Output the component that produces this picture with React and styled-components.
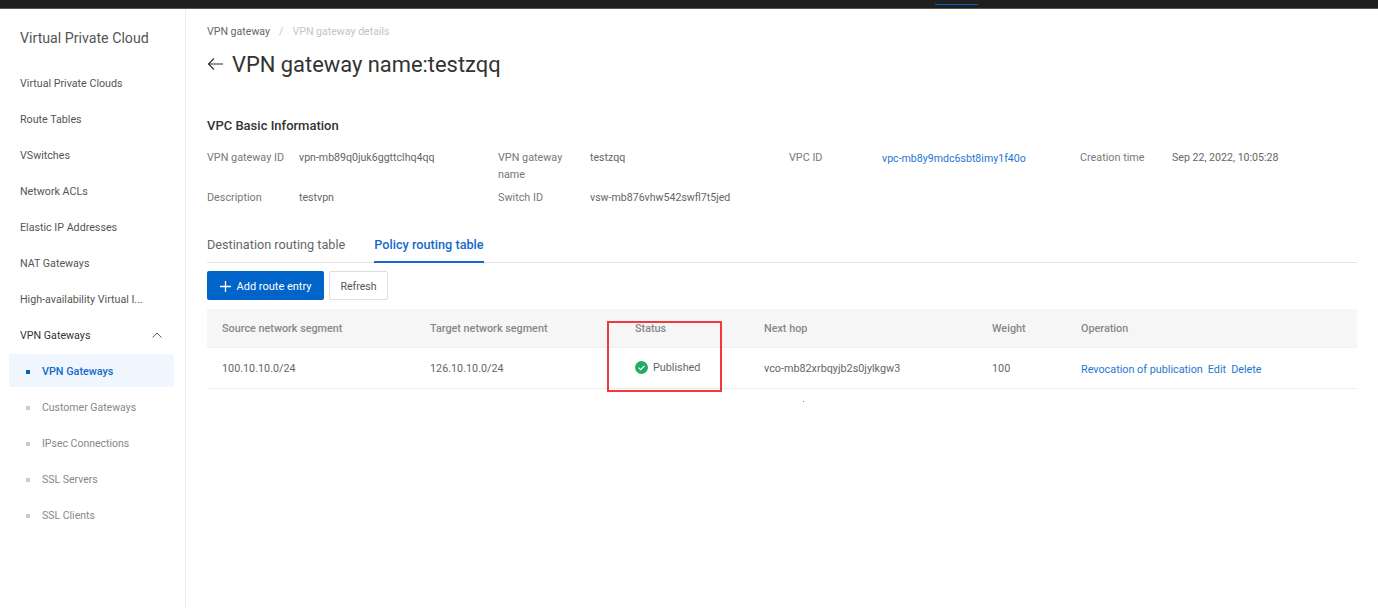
import React from "react";
import styled, { createGlobalStyle } from "styled-components";

const GlobalStyle = createGlobalStyle`
  html, body {
    margin: 0;
    padding: 0;
    background: #fff;
  }
  body {
    font-family: Roboto, "Open Sans", "Liberation Sans", sans-serif;
    font-size: 10.8px;
    color: #666;
  }
  * {
    box-sizing: border-box;
  }
`;

const Page = styled.div`
  width: 1378px;
  height: 608px;
  overflow: hidden;
  display: flex;
  flex-direction: column;
`;

const TopBar = styled.div`
  height: 9px;
  flex: none;
  background: #1f1f1f;
  border-bottom: 1px solid #555;
  padding: 4px 0 0 935px;
`;

const TopIndicator = styled.div`
  width: 43px;
  height: 1px;
  background: #0a5fc4;
`;

const Body = styled.div`
  flex: 1;
  display: flex;
  min-height: 0;
`;

const Sidebar = styled.aside`
  width: 186px;
  flex: none;
  border-right: 1px solid #eeeeee;
  padding: 20px 11px 0 9px;
`;

const SideTitle = styled.div`
  height: 18px;
  line-height: 18px;
  font-size: 14.2px;
  color: #555;
  padding-left: 11px;
  margin-bottom: 18px;
`;

const SideItem = styled.div`
  height: 36px;
  display: flex;
  align-items: center;
  justify-content: space-between;
  padding: 0 12px 0 11px;
  font-size: 10.7px;
  color: ${(p) => (p.$open ? "#333" : "#555")};
`;

const SubList = styled.div`
  display: flex;
  flex-direction: column;
  gap: 3px;
  padding-top: 1px;
`;

const SubItem = styled.div`
  height: 33px;
  display: flex;
  align-items: center;
  gap: 12px;
  padding: 2px 0 0 17px;
  border-radius: 2px;
  font-size: ${(p) => (p.$active ? "10.8px" : "10.5px")};
  color: ${(p) => (p.$active ? "#1469cc" : "#888")};
  font-weight: ${(p) => (p.$active ? 500 : 400)};
  background: ${(p) => (p.$active ? "#eff6fe" : "transparent")};
`;

const SubDot = styled.span`
  width: 4px;
  height: 4px;
  flex: none;
  background: ${(p) => (p.$active ? "#0a5fc4" : "#ccc")};
`;

const Main = styled.main`
  flex: 1;
  min-width: 0;
  position: relative;
  padding: 16px 21px 0 21px;
`;

const Breadcrumb = styled.div`
  display: flex;
  gap: 9px;
  height: 14px;
  line-height: 14px;
  font-size: 10.6px;
  color: #666;
`;

const Crumb = styled.span`
  color: ${(p) => p.$muted && "#c4c4c4"};
`;

const Heading = styled.h1`
  display: flex;
  align-items: center;
  gap: 8px;
  margin: 11px 0 0;
  height: 28px;
  font-size: 21.9px;
  font-weight: 400;
  color: #333;
`;

const SectionTitle = styled.h2`
  margin: 39px 0 0;
  height: 18px;
  line-height: 18px;
  font-size: 13px;
  font-weight: 500;
  color: #333;
`;

const InfoGrid = styled.div`
  display: grid;
  grid-template-columns: 291px 291px 291px 1fr;
  row-gap: 6px;
  margin-top: 14px;
`;

const InfoItem = styled.div`
  display: grid;
  grid-template-columns: 92px 1fr;
  line-height: 17px;
  min-height: 17px;
`;

const InfoLabel = styled.div`
  color: #777;
  width: 72px;
  white-space: ${(p) => (p.$wrap ? "normal" : "nowrap")};
`;

const InfoValue = styled.div`
  font-size: 10.6px;
  color: ${(p) => (p.$link ? "#1e78d2" : "#666")};
  padding: ${(p) => (p.$link ? "1px 0 0 1px" : "0")};
  white-space: nowrap;
`;

const Tabs = styled.div`
  display: flex;
  gap: 29px;
  margin-top: 25px;
  height: 32px;
  border-bottom: 1px solid #e5e5e5;
`;

const Tab = styled.div`
  height: 32px;
  line-height: 28px;
  font-size: 12.7px;
  color: ${(p) => (p.$active ? "#1469cc" : "#666")};
  font-weight: ${(p) => (p.$active ? 500 : 400)};
  border-bottom: ${(p) => (p.$active ? "2px solid #1469cc" : "none")};
`;

const Toolbar = styled.div`
  display: flex;
  gap: 5px;
  margin-top: 8px;
`;

const PrimaryButton = styled.button`
  width: 117px;
  height: 29px;
  display: flex;
  align-items: center;
  justify-content: center;
  gap: 6px;
  padding: 1px 0 0;
  border: none;
  border-radius: 2px;
  background: #0064c8;
  color: #fff;
  font: inherit;
  font-size: 11px;
`;

const Button = styled.button`
  width: 59px;
  height: 29px;
  padding: 1px 0 0;
  border: 1px solid #dedede;
  border-radius: 2px;
  background: #fff;
  color: #555;
  font: inherit;
  font-size: 10.6px;
`;

const Row = styled.div`
  display: grid;
  grid-template-columns: 208px 205px 129px 228px 89px 1fr;
  align-items: center;
  padding-left: 15px;
`;

const HeadRow = styled(Row)`
  height: 39px;
  margin-top: 9px;
  background: #f6f6f6;
  color: #888;
  font-weight: 500;
  border-bottom: 1px solid #f0f0f0;
`;

const DataRow = styled(Row)`
  height: 41px;
  color: #666;
  border-bottom: 1px solid #eeeeee;
`;

const Status = styled.div`
  display: flex;
  align-items: center;
  gap: 5px;
  padding-bottom: 2px;
`;

const Operations = styled.div`
  display: flex;
  gap: 5px;
  padding-top: 2px;
`;

const OpLink = styled.span`
  color: #1e78d2;
`;

const RedBox = styled.div`
  position: absolute;
  left: 421px;
  top: 312px;
  width: 115px;
  height: 71px;
  border: 2px solid #f2383c;
`;

const Speck = styled.div`
  position: absolute;
  left: 617px;
  top: 392px;
  width: 1px;
  height: 1px;
  background: #777;
`;

const navItems = [
  "Virtual Private Clouds",
  "Route Tables",
  "VSwitches",
  "Network ACLs",
  "Elastic IP Addresses",
  "NAT Gateways",
  "High-availability Virtual I...",
];

const subItems = ["VPN Gateways", "Customer Gateways", "IPsec Connections", "SSL Servers", "SSL Clients"];

const info = [
  { label: "VPN gateway ID", value: "vpn-mb89q0juk6ggttclhq4qq" },
  { label: "VPN gateway name", value: "testzqq", wrap: true },
  { label: "VPC ID", value: "vpc-mb8y9mdc6sbt8imy1f40o", link: true },
  { label: "Creation time", value: "Sep 22, 2022, 10:05:28" },
  { label: "Description", value: "testvpn" },
  { label: "Switch ID", value: "vsw-mb876vhw542swfl7t5jed" },
];

function BackArrow() {
  return (
    <svg width="17" height="14" viewBox="0 0 17 14" fill="none" stroke="#333" strokeWidth="1.2">
      <path d="M16 7H1.5M7 1.5L1.5 7L7 12.5" />
    </svg>
  );
}

function Chevron() {
  return (
    <svg width="10" height="6" viewBox="0 0 10 6" fill="none" stroke="#666" strokeWidth="1">
      <path d="M0.5 5.5L5 1L9.5 5.5" />
    </svg>
  );
}

function Plus() {
  return (
    <svg width="11" height="11" viewBox="0 0 11 11" stroke="#fff" strokeWidth="1.3">
      <path d="M5.5 0V11M0 5.5H11" />
    </svg>
  );
}

function CheckCircle() {
  return (
    <svg width="13" height="13" viewBox="0 0 13 13" fill="none">
      <circle cx="6.5" cy="6.5" r="6.5" fill="#23ad62" />
      <path d="M3.6 6.6L5.7 8.6L9.4 4.8" stroke="#fff" strokeWidth="1.2" />
    </svg>
  );
}

export default function App() {
  return (
    <Page>
      <GlobalStyle />
      <TopBar>
        <TopIndicator />
      </TopBar>
      <Body>
        <Sidebar>
          <SideTitle>Virtual Private Cloud</SideTitle>
          {navItems.map((item) => (
            <SideItem key={item}>{item}</SideItem>
          ))}
          <SideItem $open>
            VPN Gateways
            <Chevron />
          </SideItem>
          <SubList>
            {subItems.map((item, i) => (
              <SubItem key={item} $active={i === 0}>
                <SubDot $active={i === 0} />
                {item}
              </SubItem>
            ))}
          </SubList>
        </Sidebar>
        <Main>
          <Breadcrumb>
            <span>VPN gateway</span>
            <Crumb $muted>/</Crumb>
            <Crumb $muted>VPN gateway details</Crumb>
          </Breadcrumb>
          <Heading>
            <BackArrow />
            VPN gateway name:testzqq
          </Heading>
          <SectionTitle>VPC Basic Information</SectionTitle>
          <InfoGrid>
            {info.map((row) => (
              <InfoItem key={row.label}>
                <InfoLabel $wrap={row.wrap}>{row.label}</InfoLabel>
                <InfoValue $link={row.link}>{row.value}</InfoValue>
              </InfoItem>
            ))}
          </InfoGrid>
          <Tabs>
            <Tab>Destination routing table</Tab>
            <Tab $active>Policy routing table</Tab>
          </Tabs>
          <Toolbar>
            <PrimaryButton>
              <Plus />
              Add route entry
            </PrimaryButton>
            <Button>Refresh</Button>
          </Toolbar>
          <HeadRow>
            <div>Source network segment</div>
            <div>Target network segment</div>
            <div>Status</div>
            <div>Next hop</div>
            <div>Weight</div>
            <div>Operation</div>
          </HeadRow>
          <DataRow>
            <div>100.10.10.0/24</div>
            <div>126.10.10.0/24</div>
            <Status>
              <CheckCircle />
              Published
            </Status>
            <div>vco-mb82xrbqyjb2s0jylkgw3</div>
            <div>100</div>
            <Operations>
              <OpLink>Revocation of publication</OpLink>
              <OpLink>Edit</OpLink>
              <OpLink>Delete</OpLink>
            </Operations>
          </DataRow>
          <RedBox />
          <Speck />
        </Main>
      </Body>
    </Page>
  );
}
